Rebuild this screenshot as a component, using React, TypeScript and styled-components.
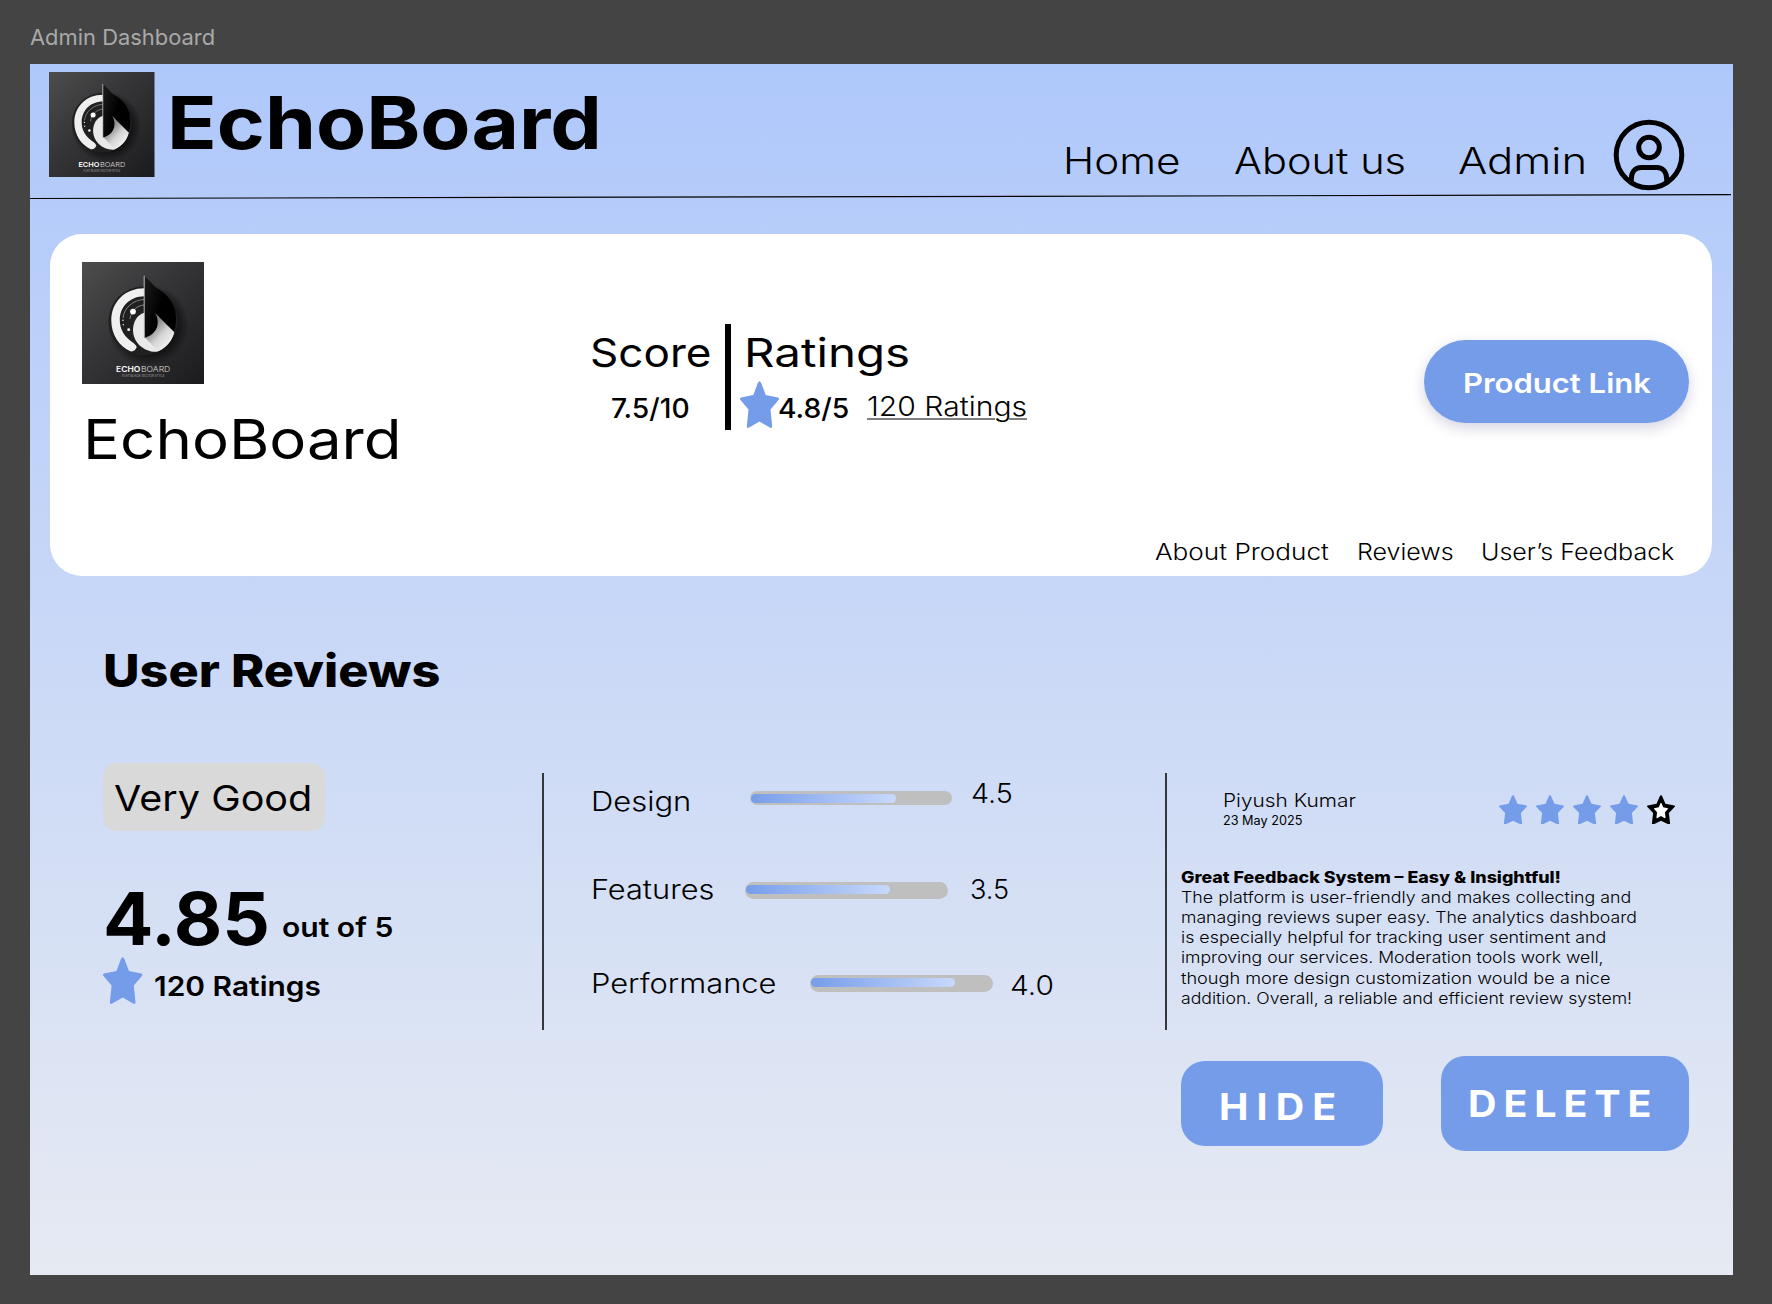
import React from "react";
import styled, { createGlobalStyle } from "styled-components";

const accent = "#749ce9";

const GlobalStyle = createGlobalStyle`
  * { box-sizing: border-box; }
  body { margin: 0; background: #444444; }
`;

/* ---------- canvas ---------- */

const Workspace = styled.div`
  width: 1772px;
  height: 1304px;
  padding: 24.8px 0 0 30px;
  overflow: hidden;
  background: #444444;
  color: #000;
  font-family: Inter, "Liberation Sans", sans-serif;
`;

const Frame = styled.main`
  width: 1703px;
  height: 1211px;
  display: flex;
  flex-direction: column;
  background: linear-gradient(180deg, #afc8fb 0%, #e6eaf2 100%);
`;

/* ---------- type ---------- */

interface LabelProps {
  $size: number;
  $weight?: number;
  $stretch?: number;
  $tracking?: number;
}

const Label = styled.span<LabelProps>`
  display: block;
  flex: none;
  width: max-content;
  font-size: ${(p) => p.$size}px;
  font-weight: ${(p) => p.$weight ?? 300};
  letter-spacing: ${(p) => p.$tracking ?? 0}px;
  line-height: 1;
  white-space: nowrap;
  transform: translateY(0.5px) scaleX(${(p) => p.$stretch ?? 1.1});
  transform-origin: 0 50%;
`;

const FrameName = styled(Label)`
  height: 39.2px;
  color: #a9a9a9;
`;

/* ---------- header ---------- */

const Header = styled.header`
  display: flex;
  align-items: flex-start;
  height: 130px;
  padding-left: 19px;
`;

const LogoSvg = styled.svg<{ $size: number }>`
  display: block;
  flex: none;
  width: ${(p) => p.$size}px;
  height: ${(p) => p.$size}px;
`;

const HeaderLogo = styled.div`
  padding-top: 8px;
`;

const HeaderTitle = styled.h1`
  margin: 21.5px 0 0 12px;
`;

const Nav = styled.nav`
  display: grid;
  grid-template-columns: 171.1px 224.4px 155.2px 72px;
  margin-left: auto;
  margin-right: 47.8px;
  padding-top: 55px;
`;

const NavItem = styled.a`
  padding-top: 22.8px;
`;

const Avatar = styled.svg`
  display: block;
  width: 72px;
  height: 72px;
`;

const HeaderRule = styled.svg`
  display: block;
  flex: none;
  width: 1703px;
  height: 6px;
`;

/* ---------- product card ---------- */

const Card = styled.section`
  flex: none;
  display: flex;
  flex-direction: column;
  width: 1661.6px;
  height: 342px;
  margin: 34px 0 0 20.3px;
  border-radius: 32px;
  background: #fff;
`;

const CardMain = styled.div`
  display: flex;
  align-items: flex-start;
  height: 305.7px;
  padding-left: 31.7px;
`;

const Brand = styled.div`
  width: 509px;
  padding-top: 28.5px;
`;

const BrandName = styled.h2`
  margin: 26.3px 0 0 0.7px;
`;

const ScoreBlock = styled.div`
  width: 134.3px;
  padding-top: 97.8px;
`;

const ScoreTitle = styled.div`
  margin-left: -0.8px;
`;

const ScoreValue = styled.div`
  padding: 22px 0 0 19.6px;
`;

const ThickRule = styled.div`
  width: 5.6px;
  height: 106px;
  margin-top: 90px;
  background: #000;
`;

const RatingBlock = styled.div`
  padding: 97.8px 0 0 9px;
`;

const RatingTitle = styled.div`
  padding-left: 4.5px;
`;

const RatingRow = styled.div`
  display: grid;
  grid-template-columns: 38.2px 88.6px auto;
  margin-top: 9px;
`;

const RatingValue = styled.div`
  padding-top: 13.1px;
`;

const RatingCount = styled.a`
  padding-top: 10.8px;
`;

const Underlined = styled(Label)`
  text-decoration: underline;
  text-decoration-thickness: 1.3px;
  text-underline-offset: 3.4px;
`;

const ProductButton = styled.button`
  width: 265px;
  height: 83px;
  margin: 106.3px 22.5px 0 auto;
  padding: 28.6px 0 0 38.4px;
  display: flex;
  align-items: flex-start;
  border: 0;
  border-radius: 42px;
  background: ${accent};
  color: #fff;
  font-family: inherit;
  box-shadow: 0 5px 14px rgba(40, 40, 110, 0.2);
`;

const Tabs = styled.nav`
  display: grid;
  grid-template-columns: 201.9px 124.2px auto;
  padding-left: 1104.4px;
`;

/* ---------- reviews ---------- */

const SectionTitle = styled.h2`
  margin: 70.8px 0 0 73px;
`;

const Columns = styled.section`
  display: flex;
  align-items: flex-start;
  margin-top: 71.2px;
  padding-left: 72.7px;
`;

const Summary = styled.div`
  width: 439.5px;
`;

const Badge = styled.div`
  width: 222px;
  height: 68.3px;
  padding: 15.9px 0 0 11.8px;
  border-radius: 14px;
  background: #d9d9d9;
`;

const AverageRow = styled.div`
  display: grid;
  grid-template-columns: 179.3px auto;
  height: 73px;
  margin-top: 49.7px;
`;

const AverageUnit = styled.div`
  padding-top: 31.8px;
`;

const CountRow = styled.div`
  display: grid;
  grid-template-columns: 50.6px auto;
  margin: 2.7px 0 0 0.6px;
`;

const CountLabel = styled.div`
  padding-top: 15.5px;
`;

const ThinRule = styled.div`
  flex: none;
  width: 1.5px;
  height: 256.3px;
  margin-top: 10.5px;
  background: #34373c;
`;

const Aspects = styled.div`
  display: flex;
  flex-direction: column;
  width: 621.8px;
  padding: 16.3px 0 0 47.3px;
`;

const AspectRow = styled.div<{ $height: number }>`
  display: flex;
  align-items: flex-start;
  height: ${(p) => p.$height}px;
`;

const AspectName = styled.div<{ $width: number; $drop?: number }>`
  flex: none;
  width: ${(p) => p.$width}px;
  padding-top: ${(p) => p.$drop ?? 0}px;
`;

const Track = styled.div<{ $width: number; $height: number; $drop: number }>`
  flex: none;
  width: ${(p) => p.$width}px;
  height: ${(p) => p.$height}px;
  margin-top: ${(p) => p.$drop}px;
  padding: 2.6px 0 0 1px;
  border-radius: 9px;
  background: #bfbfbf;
`;

const Fill = styled.div`
  width: 144.6px;
  height: 9.6px;
  border-radius: 5px;
  background: linear-gradient(90deg, #779dea, #c8d9fb);
`;

const AspectScore = styled.div<{ $gap: number; $drop?: number }>`
  padding: ${(p) => p.$drop ?? 0}px 0 0 ${(p) => p.$gap}px;
`;

const Review = styled.article`
  padding: 26.9px 0 0 14.4px;
`;

const ReviewHead = styled.header`
  display: flex;
  align-items: flex-start;
  height: 77.2px;
  padding-left: 41.6px;
`;

const Author = styled.div`
  display: flex;
  flex-direction: column;
  gap: 6px;
  width: 276.1px;
`;

const StarRow = styled.div`
  display: flex;
  gap: 9px;
  padding-top: 4.8px;
`;

const StarSvg = styled.svg<{ $w: number; $h: number }>`
  display: block;
  flex: none;
  width: ${(p) => p.$w}px;
  height: ${(p) => p.$h}px;
`;

const ReviewText = styled.p`
  margin: 0;
`;

const ReviewLine = styled(Label)`
  height: 20.1px;
  line-height: 20.1px;
`;

const Actions = styled.div`
  display: flex;
  align-items: flex-start;
  gap: 57.4px;
  margin-top: 48.6px;
`;

const ActionButton = styled.button<{ $w: number; $h: number; $drop?: number; $inset: string }>`
  display: flex;
  align-items: flex-start;
  flex: none;
  width: ${(p) => p.$w}px;
  height: ${(p) => p.$h}px;
  margin: ${(p) => p.$drop ?? 0}px 0 0;
  padding: ${(p) => p.$inset};
  border: 0;
  border-radius: 24px;
  background: ${accent};
  color: #fff;
  font-family: inherit;
`;

/* ---------- drawings ---------- */

const Logo = ({ size, id }: { size: number; id: string }) => (
  <LogoSvg $size={size} viewBox="0 0 122 122" role="img" aria-label="EchoBoard">
    <defs>
      <linearGradient id={`${id}-bg`} x1="0" y1="0" x2="1" y2="1">
        <stop offset="0" stopColor="#4d4d4e" />
        <stop offset="0.45" stopColor="#343436" />
        <stop offset="1" stopColor="#1b1b1d" />
      </linearGradient>
      <radialGradient id={`${id}-shade`}>
        <stop offset="0.72" stopColor="#0c0c0d" stopOpacity="0.75" />
        <stop offset="1" stopColor="#0c0c0d" stopOpacity="0" />
      </radialGradient>
      <linearGradient id={`${id}-fold`} x1="0.3" y1="0.35" x2="0.75" y2="0.9">
        <stop offset="0" stopColor="#8a8a8a" />
        <stop offset="0.5" stopColor="#d6d6d6" />
        <stop offset="1" stopColor="#f2f2f2" />
      </linearGradient>
      <linearGradient id={`${id}-blade`} x1="0" y1="0" x2="1" y2="0.6">
        <stop offset="0" stopColor="#1d1d1e" />
        <stop offset="0.6" stopColor="#000" />
      </linearGradient>
    </defs>
    <rect width="122" height="122" fill={`url(#${id}-bg)`} />
    <circle cx="66" cy="63" r="41" fill={`url(#${id}-shade)`} />
    <circle cx="61" cy="59" r="34.5" fill="#202021" />
    <path
      d="M62.3 26.3 C43 26.3 29.3 40 29.3 58.5 C29.3 72.5 37 84 48.3 89.3 C51.5 90 53.6 87.8 54.8 85 C53.6 81.8 50.5 80.5 47.5 78 C41.5 73 37.8 66.5 37.8 58 C37.8 45 47.5 34.3 62.3 34.2 Z"
      fill="#efefef"
    />
    <path d="M62 37.5 C51 38 42 46 41 56" fill="none" stroke="#a8a8a8" strokeWidth="0.7" />
    <path d="M62 43 C55.5 43.5 49 48.5 48 57" fill="none" stroke="#a8a8a8" strokeWidth="0.7" />
    <circle cx="51" cy="49.6" r="2.9" fill="#fff" />
    <circle cx="46.7" cy="67.7" r="1.4" fill="#fff" />
    <circle cx="41" cy="58.3" r="0.8" fill="#ddd" />
    <circle cx="41.3" cy="62.8" r="0.8" fill="#ddd" />
    <path
      d="M63 50.5 C55 52.5 51 60 51 68 C51 80.5 62 90.5 75 89.8 C83 86.5 90 79.5 92.2 70 L73 51 Z"
      fill="#e9e9e9"
    />
    <path d="M63 75.5 C72 73.5 76.5 66 75.5 58 L73 51 L92.2 70 C90 79 84 86 76 89 Z" fill={`url(#${id}-fold)`} />
    <path
      d="M62.3 13.7 L70.5 22 C73 25.5 76 26.5 80 29.5 C88.5 35.5 94 45 94 56 C94 61 93.3 66 92.2 70 L73 51 C79 60 75.5 73 62.3 75.8 Z"
      fill={`url(#${id}-blade)`}
    />
    <path d="M62.2 13.7 V75.5" stroke="#c9c9c9" strokeWidth="0.9" />
    <text x="34" y="110.3" fontSize="7.5" fontWeight="600" fill="#fff" textLength="24.3" lengthAdjust="spacingAndGlyphs">
      ECHO
    </text>
    <text x="59" y="110.3" fontSize="7.5" fontWeight="300" fill="#dcdcdc" textLength="29.3" lengthAdjust="spacingAndGlyphs">
      BOARD
    </text>
    <text x="40" y="115.4" fontSize="3.5" fill="#a6a6a6" textLength="42.6" lengthAdjust="spacingAndGlyphs">
      FLAT BLACK VECTOR STYLE
    </text>
  </LogoSvg>
);

const starPath =
  "M18.5 0.9 Q19.5 -0.5 20.5 0.9 L21.3 2.2 L25.7 14 L38 16.5 Q39.6 17.2 38.7 18.7 L30.5 28.6 L32.2 45.5 Q31.9 47.4 30.3 46.8 L19.5 40.6 L8.7 46.8 Q7.1 47.4 6.8 45.5 L8.5 28.6 L0.3 18.7 Q-0.6 17.2 1 16.5 L13.3 14 L17.7 2.2 Z";

const Star = ({ w, h, empty }: { w: number; h: number; empty?: boolean }) => (
  <StarSvg $w={w} $h={h} viewBox="0 0 39 47" preserveAspectRatio="none">
    <path d={starPath} fill={empty ? "#000" : accent} />
    {empty && <path d={starPath} fill="#fff" transform="translate(9.75 12.3) scale(0.5 0.52)" />}
  </StarSvg>
);

const aspects = [
  { name: "Design", score: "4.5", row: 95.7, label: 159.3, labelDrop: 7.3, w: 201.4, h: 14.3, drop: 11.9, gap: 19.6, scoreDrop: 0, ls: 1.13, ss: 1.048 },
  { name: "Features", score: "3.5", row: 93.6, label: 153.6, labelDrop: 0, w: 203.2, h: 17, drop: 7.2, gap: 22.7, scoreDrop: 0, ls: 1.122, ss: 0.99 },
  { name: "Performance", score: "4.0", row: 60, label: 218.7, labelDrop: 0, w: 183.3, h: 17.3, drop: 6.6, gap: 16.7, scoreDrop: 2.7, ls: 1.127, ss: 1.09 },
];

const reviewLines: [string, number][] = [
  ["The platform is user-friendly and makes collecting and", 1.127],
  ["managing reviews super easy. The analytics dashboard", 1.118],
  ["is especially helpful for tracking user sentiment and", 1.128],
  ["improving our services. Moderation tools work well,", 1.116],
  ["though more design customization would be a nice", 1.147],
  ["addition. Overall, a reliable and efficient review system!", 1.118],
];

export default function App() {
  return (
    <>
      <GlobalStyle />
      <Workspace>
        <FrameName $size={22} $weight={400} $stretch={0.996}>Admin Dashboard</FrameName>
        <Frame>
          <Header>
            <HeaderLogo>
              <Logo size={105.5} id="head" />
            </HeaderLogo>
            <HeaderTitle>
              <Label $size={73} $weight={700} $stretch={1.122}>EchoBoard</Label>
            </HeaderTitle>
            <Nav>
              <NavItem><Label $size={36.5} $stretch={1.156}>Home</Label></NavItem>
              <NavItem><Label $size={36.5} $stretch={1.138}>About us</Label></NavItem>
              <NavItem><Label $size={36.5} $stretch={1.193}>Admin</Label></NavItem>
              <Avatar viewBox="0 0 72 72" fill="none" stroke="#000" strokeWidth="5">
                <circle cx="36" cy="36" r="32.8" />
                <circle cx="36" cy="28.5" r="10.3" />
                <path d="M18.3 62.500 V60.500 C18.3 53 22 48.6 28.5 48.6 H43.5 C50 48.6 53.7 53 53.7 60.500 V62.500" />
              </Avatar>
            </Nav>
          </Header>
          <HeaderRule viewBox="0 0 1703 6">
            <line x1="0" y1="4.5" x2="1701" y2="0.7" stroke="#000" strokeWidth="1.2" />
          </HeaderRule>

          <Card>
            <CardMain>
              <Brand>
                <Logo size={122} id="card" />
                <BrandName>
                  <Label $size={54.6} $weight={400} $stretch={1.131}>EchoBoard</Label>
                </BrandName>
              </Brand>
              <ScoreBlock>
                <ScoreTitle><Label $size={40} $weight={400} $stretch={1.102}>Score</Label></ScoreTitle>
                <ScoreValue><Label $size={27.2} $weight={500} $stretch={1.038}>7.5/10</Label></ScoreValue>
              </ScoreBlock>
              <ThickRule />
              <RatingBlock>
                <RatingTitle><Label $size={40} $weight={400} $stretch={1.186}>Ratings</Label></RatingTitle>
                <RatingRow>
                  <Star w={39} h={47} />
                  <RatingValue><Label $size={27.2} $weight={500} $stretch={1.041}>4.8/5</Label></RatingValue>
                  <RatingCount><Underlined $size={27.2} $stretch={1.106}>120 Ratings</Underlined></RatingCount>
                </RatingRow>
              </RatingBlock>
              <ProductButton>
                <Label $size={27.5} $weight={600} $stretch={1.127}>Product Link</Label>
              </ProductButton>
            </CardMain>
            <Tabs>
              <Label $size={22.3} $stretch={1.173}>About Product</Label>
              <Label $size={22.3} $stretch={1.122}>Reviews</Label>
              <Label $size={22.3} $stretch={1.122}>User’s Feedback</Label>
            </Tabs>
          </Card>

          <SectionTitle>
            <Label $size={45} $weight={800} $stretch={1.119}>User Reviews</Label>
          </SectionTitle>

          <Columns>
            <Summary>
              <Badge><Label $size={36} $weight={400} $stretch={1.098}>Very Good</Label></Badge>
              <AverageRow>
                <Label $size={73} $weight={700} $stretch={1.022}>4.85</Label>
                <AverageUnit><Label $size={27.2} $weight={600} $stretch={1.105}>out of 5</Label></AverageUnit>
              </AverageRow>
              <CountRow>
                <Star w={39.4} h={47} />
                <CountLabel><Label $size={27.2} $weight={600} $stretch={1.1}>120 Ratings</Label></CountLabel>
              </CountRow>
            </Summary>

            <ThinRule />

            <Aspects>
              {aspects.map((a) => (
                <AspectRow key={a.name} $height={a.row}>
                  <AspectName $width={a.label} $drop={a.labelDrop}>
                    <Label $size={27.4} $stretch={a.ls}>{a.name}</Label>
                  </AspectName>
                  <Track $width={a.w} $height={a.h} $drop={a.drop}><Fill /></Track>
                  <AspectScore $gap={a.gap} $drop={a.scoreDrop}>
                    <Label $size={27.4} $stretch={a.ss}>{a.score}</Label>
                  </AspectScore>
                </AspectRow>
              ))}
            </Aspects>

            <ThinRule />

            <Review>
              <ReviewHead>
                <Author>
                  <Label $size={18.3} $stretch={1.14}>Piyush Kumar</Label>
                  <Label $size={12.4} $weight={400} $stretch={1.023}>23 May 2025</Label>
                </Author>
                <StarRow>
                  {[0, 1, 2, 3, 4].map((i) => (
                    <Star key={i} w={28} h={29.7} empty={i === 4} />
                  ))}
                </StarRow>
              </ReviewHead>
              <ReviewText>
                <ReviewLine $size={15.8} $weight={800} $stretch={1.131}>
                  Great Feedback System – Easy &amp; Insightful!
                </ReviewLine>
                {reviewLines.map(([text, stretch]) => (
                  <ReviewLine key={text} $size={15.8} $stretch={stretch}>{text}</ReviewLine>
                ))}
              </ReviewText>
              <Actions>
                <ActionButton $w={201.9} $h={85.4} $drop={4.7} $inset="26.8px 0 0 38px">
                  <Label $size={36.5} $weight={700} $stretch={1.08} $tracking={7.5}>HIDE</Label>
                </ActionButton>
                <ActionButton $w={248.6} $h={94.7} $inset="29.2px 0 0 27.8px">
                  <Label $size={36.5} $weight={700} $stretch={1.08} $tracking={6.4}>DELETE</Label>
                </ActionButton>
              </Actions>
            </Review>
          </Columns>
        </Frame>
      </Workspace>
    </>
  );
}
